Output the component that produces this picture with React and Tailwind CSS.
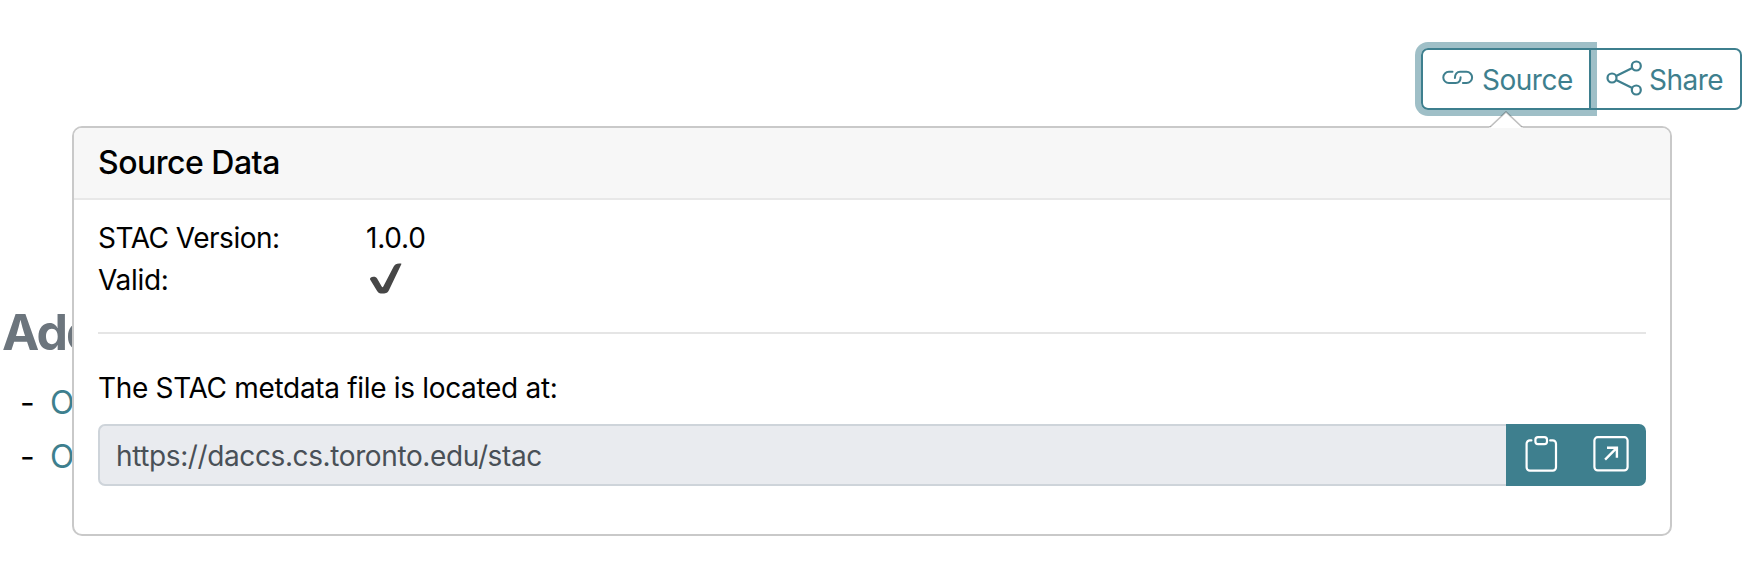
function LinkIcon() {
  return (
    <svg className="mb-[3px] h-[15px] w-[32px] shrink-0" viewBox="0 0 32 15" fill="none" stroke="currentColor" strokeWidth="2" strokeLinecap="round" strokeLinejoin="round">
      <path d="M10.500 1.800H6.900a5.500 5.500 0 0 0 0 11.200h6.800c3 0 4.900-2.200 4.900-5.700" />
      <path d="M20.900 13h3.600a5.600 5.600 0 0 0 0-11.200h-6.400c-3 0-5.200 2.200-5.200 6.200" />
    </svg>
  );
}

function ShareIcon() {
  return (
    <svg className="mb-[3px] h-[36px] w-[36px] shrink-0" viewBox="0 0 36 36" fill="none" stroke="currentColor" strokeWidth="2.200">
      <circle cx="6" cy="18" r="4.500" />
      <circle cx="30.300" cy="6" r="4.500" />
      <circle cx="30.300" cy="30" r="4.500" />
      <path d="M10.100 16 26.300 8M10.100 20l16.200 8" />
    </svg>
  );
}

function ClipboardIcon() {
  return (
    <svg className="h-[36px] w-[36px]" viewBox="0 0 36 36" fill="none" stroke="currentColor" strokeWidth="2.200" strokeLinecap="round">
      <path d="M8.400 4.400H6.900a3.300 3.300 0 0 0-3.300 3.300v23.600a3.300 3.300 0 0 0 3.300 3.300h22.800a3.300 3.300 0 0 0 3.300-3.300V7.700a3.300 3.300 0 0 0-3.300-3.300h-2.500" />
      <rect x="12.400" y="1.200" width="11.600" height="7" rx="2.600" />
    </svg>
  );
}

function OpenIcon() {
  return (
    <svg className="h-[36px] w-[36px]" viewBox="0 0 36 36" fill="none" stroke="currentColor" strokeWidth="2.200">
      <rect x="1.400" y="1.200" width="33.200" height="33.200" rx="3.300" />
      <path d="M12.100 23.600 23.500 12.200M14 11.800h9.900v10" strokeWidth="2.400" />
    </svg>
  );
}

function CheckIcon() {
  return (
    <svg className="mt-[4px] ml-[4px] h-[31px] w-[32px]" viewBox="0 0 32 31" fill="#464646">
      <path d="M.1 16.500c-.3-1.600.6-2.300 2-2.600 2.400-.5 4-.2 5 1.600l4.600 8c.6.900 1.100.9 1.600 0L23.700 3.600C25.100 1 26.800.3 30.800.6c.6 0 .7.300.4.900L19.400 26.300c-1.700 3.500-3 4.300-6.500 4.300-3.400 0-4.700-.8-6.400-3.700z" />
    </svg>
  );
}

export default function App() {
  return (
    <div className="relative h-[572px] w-[1754px] overflow-hidden bg-white pt-[48px] font-['Inter',sans-serif] text-[28px] text-black">
      <div className="ml-[1421px] flex h-[62px] w-[321px] text-[#3e7f8e]">
        <button className="flex w-[170px] items-center rounded-l-[7px] border-2 border-[#3e7f8e] pl-[19px] shadow-[0_0_0_6px_#9fbfc7]">
          <LinkIcon />
          <span className="mt-[2px] ml-[8px] text-[28px] leading-[42px] tracking-[-0.5px]">Source</span>
        </button>
        <button className="flex w-[151px] items-center rounded-r-[7px] border-2 border-l-0 border-[#3e7f8e] pl-[15px]">
          <ShareIcon />
          <span className="mt-[2px] ml-[7px] text-[28px] leading-[42px] tracking-[-0.5px]">Share</span>
        </button>
      </div>

      <main className="mt-[189px] whitespace-nowrap">
        <h2 className="ml-[2px] h-[66px] text-[50px] leading-[66px] font-bold tracking-[-1.8px] text-[#6c757d]">Add</h2>
        <ul className="mt-[11px] text-[32px] leading-[54px]">
          <li className="flex"><span className="w-[50px] shrink-0 pl-[20px]">-</span><a className="text-[#3e7f8e]">O</a></li>
          <li className="flex"><span className="w-[50px] shrink-0 pl-[20px]">-</span><a className="text-[#3e7f8e]">O</a></li>
        </ul>
      </main>

      <section className="absolute top-[126px] left-[72px] h-[410px] w-[1600px] rounded-[10px] border-2 border-[#c9c9c9] bg-white">
        <svg className="absolute top-[-17px] left-[1415px] h-[17px] w-[34px]" viewBox="0 0 34 17">
          <path d="M0 17 17 1l17 16z" fill="white" />
          <path d="M1 16 17 1l16 15" fill="none" stroke="#000" strokeOpacity=".25" strokeWidth="1.700" />
        </svg>
        <h3 className="h-[72px] rounded-t-[8px] border-b-2 border-[#e8e8e8] bg-[#f7f7f7] pl-[24px] text-[32px] leading-[70px] font-medium tracking-[-0.5px]">Source Data</h3>
        <div className="px-[24px] pt-[17px]">
          <dl className="grid grid-cols-[268px_1fr] leading-[42px] tracking-[-0.5px]">
            <dt>STAC Version:</dt>
            <dd className="tracking-[-0.2px]">1.0.0</dd>
            <dt className="tracking-[-0.3px]">Valid:</dt>
            <dd><CheckIcon /></dd>
          </dl>
          <hr className="mt-[31px] border-t-2 border-[#e5e5e5]" />
          <p className="mt-[33px] leading-[42px] tracking-[-0.32px]">The STAC metdata file is located at:</p>
          <div className="mt-[15px] flex h-[62px]">
            <div className="w-[1408px] rounded-l-[7px] border-2 border-r-0 border-[#ced4da] bg-[#e9ebef] pl-[16px] leading-[60px] tracking-[-0.39px] text-[#495057]">https://daccs.cs.toronto.edu/stac</div>
            <div className="flex w-[140px] rounded-r-[7px] bg-[#3e7f8e] text-white">
              <button className="flex w-1/2 items-start justify-center pt-[12px]"><ClipboardIcon /></button>
              <button className="flex w-1/2 items-start justify-center pt-[12px]"><OpenIcon /></button>
            </div>
          </div>
        </div>
      </section>
    </div>
  );
}
